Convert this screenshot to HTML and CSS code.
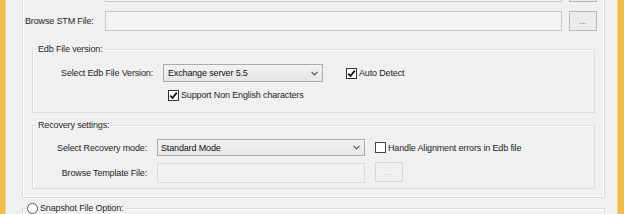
FILE: index.html
```html
<!DOCTYPE html>
<html lang="en">
<head>
    <meta charset="UTF-8">
    <title>Edb Recovery Options</title>
    <link rel="stylesheet" href="styles.css">
</head>
<body>
    <div class="window">
        <div class="edge edge-left"></div>
        <div class="main">
            <div class="panel">
                <!-- row scrolled half out of view -->
                <div class="row row-cut">
                    <span class="label"></span>
                    <span class="textbox"></span>
                    <span class="btn"></span>
                </div>
                <div class="row row-stm">
                    <span class="label">Browse STM File:</span>
                    <span class="textbox"></span>
                    <span class="btn">...</span>
                </div>

                <fieldset class="group group-edb">
                    <legend>Edb File version:</legend>
                    <div class="group-body">
                        <div class="line">
                            <span class="label-r edb-label">Select Edb File Version:</span>
                            <div class="combo edb-combo">
                                <span>Exchange server 5.5</span>
                                <svg class="chevron" width="7" height="5" viewBox="0 0 7 5"><path d="M0.5 0.8 L3.5 3.8 L6.5 0.8" fill="none" stroke="#555" stroke-width="1.2"/></svg>
                            </div>
                            <span class="check checked auto">
                                <svg width="9" height="9" viewBox="0 0 9 9"><path d="M1.2 4.6 L3.5 7 L7.8 1.6" fill="none" stroke="#111" stroke-width="1.8"/></svg>
                            </span>
                            <span class="check-text">Auto Detect</span>
                        </div>
                        <div class="line line-support">
                            <span class="check checked">
                                <svg width="9" height="9" viewBox="0 0 9 9"><path d="M1.2 4.6 L3.5 7 L7.8 1.6" fill="none" stroke="#111" stroke-width="1.8"/></svg>
                            </span>
                            <span class="check-text">Support Non English characters</span>
                        </div>
                    </div>
                </fieldset>

                <fieldset class="group group-recovery">
                    <legend>Recovery settings:</legend>
                    <div class="group-body">
                        <div class="line">
                            <span class="label-r rec-label">Select Recovery mode:</span>
                            <div class="combo rec-combo">
                                <span>Standard Mode</span>
                                <svg class="chevron" width="7" height="5" viewBox="0 0 7 5"><path d="M0.5 0.8 L3.5 3.8 L6.5 0.8" fill="none" stroke="#555" stroke-width="1.2"/></svg>
                            </div>
                            <span class="check handle"></span>
                            <span class="check-text">Handle Alignment errors in Edb file</span>
                        </div>
                        <div class="line line-template">
                            <span class="label-r rec-label">Browse Template File:</span>
                            <span class="textbox disabled template-box"></span>
                            <span class="btn disabled">...</span>
                        </div>
                    </div>
                </fieldset>
            </div>

            <fieldset class="group group-snapshot">
                <legend><span class="radio"></span><span class="check-text">Snapshot File Option:</span></legend>
                <div class="snap-body"></div>
            </fieldset>
        </div>
        <div class="edge edge-right"></div>
    </div>
</body>
</html>
```

FILE: styles.css
```css
body {
    margin: 0;
    height: 214px;
    overflow: hidden;
    background-color: #f0f0f0;
    font-family: "Liberation Sans", Arial, sans-serif;
    font-size: 9px;
    letter-spacing: -0.15px;
    color: #262626;
}
.window {
    display: flex;
    height: 214px;
    overflow: hidden;
}
.edge {
    flex: none;
    background-color: #efbd4f;
}
.edge-left {
    width: 6px;
    box-shadow: inset -1px 0 #f6d27c;
}
.edge-right {
    width: 7px;
    box-shadow: inset 1px 0 #f6d27c;
}
.main {
    flex: 1;
    padding: 0 12px 0 16px;
}
.panel {
    margin-top: -18px;
    padding-bottom: 8px;
    border: 1px solid #dcdcdc;
    border-top: none;
    box-shadow: inset 1px 0 #fff, inset -1px 0 #fff, inset 0 -1px #fff;
}
.row {
    display: flex;
    align-items: center;
    padding-left: 2px;
}
.row-stm {
    margin-top: 9px;
}
.label {
    width: 80px;
    flex: none;
}
.textbox {
    display: block;
    width: 455px;
    height: 18px;
    border: 1px solid #c8c8c8;
    background-color: #f3f3f3;
    flex: none;
}
.textbox.disabled {
    border-color: #dadada;
    background-color: #f1f1f1;
}
.btn {
    display: flex;
    justify-content: center;
    align-items: center;
    width: 26px;
    height: 18px;
    margin-left: 7px;
    border: 1px solid #b8b8b8;
    background-color: #ebebeb;
    font-size: 8px;
    letter-spacing: 0.5px;
    color: #444;
    flex: none;
}
.btn.disabled {
    border-color: #d6d6d6;
    background-color: #f0f0f0;
    color: #b0b0b0;
}
.group {
    margin: 12px 9px 0 9px;
    padding: 0;
    border: 1px solid #dcdcdc;
    box-shadow: inset 1px 1px #fff;
    min-inline-size: 0;
}
.group legend {
    margin-left: 3px;
    padding: 0 2px;
    line-height: 12px;
}
.group-body {
    padding: 9px 0 10px 0;
}
.group-recovery {
    margin-top: 6px;
}
.group-recovery .group-body {
    padding: 8px 0 5px 0;
}
.line {
    display: flex;
    align-items: center;
}
.label-r {
    flex: none;
    text-align: right;
    margin-right: 10px;
}
.edb-label {
    width: 120px;
}
.rec-label {
    width: 114px;
}
.combo {
    display: flex;
    align-items: center;
    justify-content: space-between;
    box-sizing: border-box;
    padding: 0 4px 0 4px;
    border: 1px solid #acacac;
    background: linear-gradient(#f2f2f2, #e6e6e6);
    color: #111;
    flex: none;
}
.edb-combo {
    width: 160px;
    height: 18px;
}
.rec-combo {
    width: 208px;
    height: 17px;
    padding-left: 3px;
}
.check {
    display: flex;
    justify-content: center;
    align-items: center;
    box-sizing: border-box;
    width: 11px;
    height: 11px;
    border: 1px solid #333;
    background-color: #fff;
    margin-right: 2px;
    flex: none;
}
.auto {
    margin-left: 23px;
}
.handle {
    margin-left: 10px;
    border-color: #444;
}
.check-text {
    color: #1e1e1e;
}
.line-support {
    margin-top: 6px;
    height: 14px;
    padding-left: 135px;
}
.line-template {
    margin-top: 6px;
    align-items: flex-start;
}
.line-template .rec-label {
    align-self: center;
    margin-top: 1px;
}
.template-box {
    width: 206px;
    margin-top: 1px;
}
.line-template .btn {
    margin-left: 10px;
}
.group-snapshot {
    margin: 4px 0 0 0;
}
.group-snapshot legend {
    display: flex;
    align-items: center;
    margin-left: 4px;
    padding: 0 2px 0 0;
}
.radio {
    display: inline-block;
    box-sizing: border-box;
    width: 11px;
    height: 11px;
    border: 1px solid #555;
    border-radius: 50%;
    background-color: #fff;
    margin-right: 2px;
}
.snap-body {
    height: 30px;
}
```
